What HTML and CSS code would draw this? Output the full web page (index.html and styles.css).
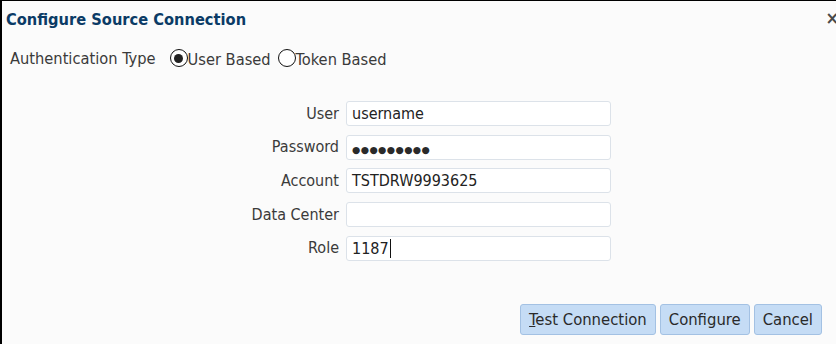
FILE: index.html
```html
<!DOCTYPE html>
<html lang="en">
<head>
  <meta charset="UTF-8">
  <meta name="viewport" content="width=device-width, initial-scale=1.0">
  <title>Configure Source Connection</title>
  <link rel="stylesheet" href="styles.css">
</head>
<body>
  <div class="dialog">
    <div class="title">Configure Source Connection</div>
    <span class="close">&times;</span>

    <div class="auth">
      <span class="auth-label">Authentication Type</span>
      <label class="radio"><span class="dot checked"></span>User Based</label>
      <label class="radio"><span class="dot"></span>Token Based</label>
    </div>

    <div class="form">
      <span class="label">User</span>
      <div class="field">username</div>

      <span class="label">Password</span>
      <div class="field"><span class="dots">●●●●●●●●●</span></div>

      <span class="label">Account</span>
      <div class="field">TSTDRW9993625</div>

      <span class="label">Data Center</span>
      <div class="field"></div>

      <span class="label">Role</span>
      <div class="field"><span class="caret">1187</span></div>
    </div>

    <div class="buttons">
      <button class="btn"><u>T</u>est Connection</button>
      <button class="btn">Configure</button>
      <button class="btn">Cancel</button>
    </div>
  </div>
</body>
</html>
```

FILE: styles.css
```css
html, body {
  margin: 0;
  height: 100%;
}

body {
  font-family: "DejaVu Sans Condensed", "Liberation Sans", sans-serif;
  font-size: 16px;
  color: #3a3a3a;
  background-color: #fbfbfb;
}

.dialog {
  position: relative;
  height: 100%;
  box-sizing: border-box;
  border-top: 1px solid #000;
  border-left: 2px solid #000;
  background-color: #fbfbfb;
  display: flex;
  flex-direction: column;
}

.title {
  padding: 9px 0 0 4px;
  font-weight: bold;
  font-size: 16.3px;
  color: #0b3b66;
  line-height: 20px;
}

.close {
  position: absolute;
  top: 7px;
  right: -3px;
  font-size: 18px;
  line-height: 20px;
  color: #4a4a4a;
  font-weight: bold;
}

.auth {
  display: flex;
  align-items: center;
  margin-top: 17px;
  padding-left: 8px;
  line-height: 20px;
  font-size: 16.3px;
}

.auth-label {
  margin-right: 14px;
}

.radio {
  display: flex;
  align-items: center;
  margin-right: 7px;
  padding-top: 3px;
}

.dot {
  width: 16px;
  height: 16px;
  border: 1.5px solid #111;
  border-radius: 50%;
  background-color: #fff;
  display: flex;
  align-items: center;
  justify-content: center;
  margin-top: -4px;
}

.dot.checked::after {
  content: "";
  width: 9px;
  height: 9px;
  border-radius: 50%;
  background-color: #222;
}

.form {
  display: grid;
  grid-template-columns: 337px 265px;
  column-gap: 7px;
  row-gap: 8.7px;
  margin-top: 31px;
}

.label {
  text-align: right;
  align-self: center;
  line-height: 20px;
}

.field {
  height: 25px;
  box-sizing: border-box;
  border: 1px solid #dce2e9;
  border-radius: 3px;
  background-color: #fff;
  padding: 0 5px;
  line-height: 23px;
  color: #222;
}

.dots {
  font-family: "DejaVu Sans", sans-serif;
  font-size: 9.5px;
  letter-spacing: 0.4px;
  color: #2a2a2a;
}

.caret {
  border-right: 1px solid #111;
  padding-right: 1px;
}

.buttons {
  margin-top: auto;
  display: flex;
  justify-content: flex-end;
  gap: 4px;
  padding: 0 14px 9px 0;
}

.btn {
  height: 31px;
  padding: 0 8px;
  font-family: inherit;
  font-size: 16.5px;
  color: #2a2a2a;
  background-color: #c5dcf5;
  border: 1px solid #a3c1e3;
  border-radius: 3px;
}
```
